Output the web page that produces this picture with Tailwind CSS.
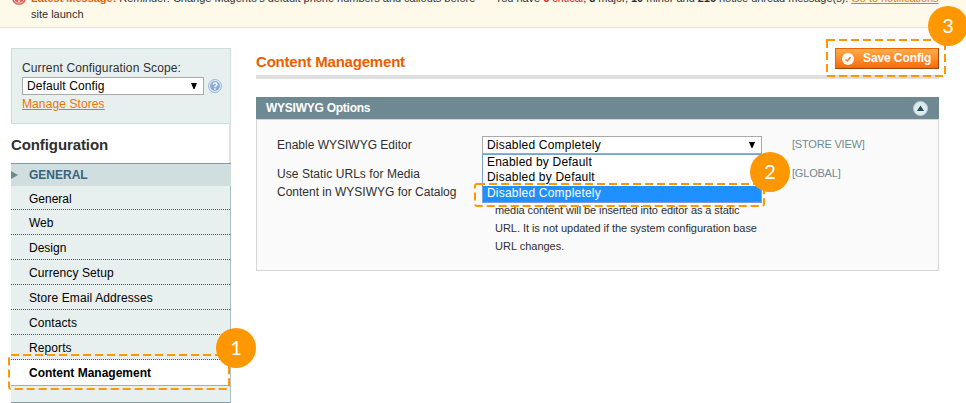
<!DOCTYPE html>
<html lang="en">
<head>
<meta charset="utf-8">
<title>Configuration</title>
<script src="https://cdn.jsdelivr.net/npm/@tailwindcss/browser@4"></script>
</head>
<body class="relative w-[966px] h-[403px] overflow-hidden bg-white text-[#2f2f2f] text-[12px] leading-[18px] font-['Liberation_Sans',Arial,sans-serif]">

<header class="h-7 flex items-end overflow-hidden bg-[#fff9e9] border-b border-[#eee2be] pl-[12px] pb-[5px] text-[11px] leading-4">
  <svg class="w-[14px] h-[14px] mb-[17px] mr-[5px] shrink-0" viewBox="0 0 14 14"><circle cx="7" cy="7" r="7" fill="#df6359"/><circle cx="7" cy="7" r="5.2" fill="none" stroke="#f6c7c0"/><path d="M7 3v5M7 9.500v1.500" stroke="#fff" stroke-width="2"/></svg>
  <p class="w-[464px] whitespace-nowrap"><span class="tracking-[-0.02px]"><b class="text-[#eb5e00]">Latest Message:</b> Reminder: Change Magento's default phone numbers and callouts before</span><br>site launch</p>
  <p class="whitespace-nowrap mb-4 tracking-[-0.04px]">You have <b class="text-[#df0a28]">6</b> <span class="text-[#df0a28]">critical</span>, <b>8</b> major, <b>10</b> minor and <b>216</b> notice unread message(s). <a class="text-[#ea7601] underline">Go to notifications</a></p>
</header>

<div class="flex pl-[11px] pt-5">
  <aside class="w-[220px] shrink-0">
    <section class="h-[76px] bg-[#e7efef] border border-[#cddddd] pl-[10px] pt-[10px]">
      <p class="tracking-[0.13px]">Current Configuration Scope:</p>
      <div class="flex items-center h-[18px]">
        <div class="flex items-center justify-between w-[182px] h-[18px] bg-white border border-[#a9a9a9] pl-1 pr-[6px] text-black"><span class="tracking-[0.1px]">Default Config</span><svg class="w-[6px] h-[6px]" viewBox="0 0 6 6"><path d="M0 0h6L3.500 6h-1z"/></svg></div>
        <svg class="w-[14px] h-[14px] ml-1" viewBox="0 0 14 14"><circle cx="7" cy="7" r="6.500" fill="#e5eef7" stroke="#9ab8d6"/><circle cx="7" cy="7" r="5" fill="#8aaed3"/><path d="M5.200 5.500C5.200 3.500 9 3.500 9 5.500C9 6.800 7 6.800 7 8.300M7 9.200v1.500" fill="none" stroke="#fff" stroke-width="1.400"/></svg>
      </div>
      <a class="inline-block text-[#ea7601] underline tracking-[0.1px]">Manage Stores</a>
    </section>
    <h3 class="h-[39px] pt-[12px] text-[15px] font-bold tracking-[-0.1px] border-r-2 border-[#e0e0e0]">Configuration</h3>
    <nav class="h-[240px] bg-[#e7efef] border-t border-[#849ba3] text-black">
      <div class="h-[22px] flex items-center bg-[#d0dedf] text-[#36637d] font-bold"><svg class="w-[7px] h-2 mr-[11px]" viewBox="0 0 7 8"><path d="M0 0L7 4L0 8z" fill="#6f8992"/></svg>GENERAL</div>
      <div class="border-r border-[#a9bfc3]">
        <a class="block h-6 pl-[18px] pt-1 border-b border-dotted border-[#555]">General</a>
        <a class="block h-[25px] pl-[18px] pt-1 border-b border-dotted border-[#555]">Web</a>
        <a class="block h-[25px] pl-[18px] pt-1 border-b border-dotted border-[#555]">Design</a>
        <a class="block h-[25px] pl-[18px] pt-1 border-b border-dotted border-[#555] tracking-[0.1px]">Currency Setup</a>
        <a class="block h-[25px] pl-[18px] pt-1 border-b border-dotted border-[#555] tracking-[0.12px]">Store Email Addresses</a>
        <a class="block h-[25px] pl-[18px] pt-1 border-b border-dotted border-[#555] tracking-[0.1px]">Contacts</a>
        <a class="block h-[25px] pl-[18px] pt-1 border-b border-dotted border-[#555] tracking-[0.1px]">Reports</a>
        <a class="block h-[26px] pl-[18px] pt-1 border-b border-[#a9a9a9] bg-white font-bold">Content Management</a>
        <div class="h-[17px] border-b border-[#849ba3]"></div>
      </div>
    </nav>
  </aside>

  <main class="w-[683px] ml-[25px]">
    <div class="h-[31px] flex justify-between border-b-4 border-[#dfdfdf]">
      <h3 class="pt-[5px] text-[15px] font-bold text-[#eb5e00] tracking-[-0.2px]">Content Management</h3>
      <button class="flex items-center w-[104px] h-[21px] pl-[6px] bg-linear-to-b from-[#ffac47] to-[#fa6900] border border-[#ed6502] border-r-[#a04300] border-b-[#a04300] text-white font-bold whitespace-nowrap"><svg class="w-3 h-3 mr-[9px]" viewBox="0 0 12 12"><circle cx="6" cy="6" r="6" fill="#fff"/><path d="M3.500 6.500L5.300 8L8.500 4" fill="none" stroke="#f47a20" stroke-width="1.500"/></svg><span class="tracking-[-0.1px] pb-0.5">Save Config</span></button>
    </div>
    <h4 class="mt-[18px] h-[22px] flex items-center justify-between pl-[10px] pr-[11px] bg-[#6f8992] text-white font-bold"><span class="tracking-[-0.25px]">WYSIWYG Options</span><svg class="w-[15px] h-[15px]" viewBox="0 0 15 15"><circle cx="7.500" cy="7.500" r="7" fill="#dcebed" stroke="#b9cfd3"/><path d="M7.500 4.500L11 10H4z" fill="#234b57"/></svg></h4>
    <section class="h-[152px] bg-[#fafafa] border border-[#d6d6d6] pl-5 pt-4 flex">
      <div class="w-[205px] whitespace-nowrap">
        <p class="mb-[11px]">Enable WYSIWYG Editor</p>
        <p><span class="tracking-[0.06px]">Use Static URLs for Media</span><br>Content in WYSIWYG for Catalog</p>
      </div>
      <div class="w-[280px]">
        <div class="flex items-center justify-between h-[18px] bg-white border border-[#a9a9a9] pl-1 pr-[6px] text-black"><span class="tracking-[0.2px]">Disabled Completely</span><svg class="w-[6px] h-[6px]" viewBox="0 0 6 6"><path d="M0 0h6L3.500 6h-1z"/></svg></div>
        <div class="h-[49px] bg-white border border-[#7b9fd8] text-black leading-[15px] tracking-[0.2px]">
          <div class="h-[15px] pl-1">Enabled by Default</div>
          <div class="h-[16px] pl-1">Disabled by Default</div>
          <div class="h-[16px] pl-1 bg-[#1e90ff] text-white">Disabled Completely</div>
        </div>
        <p class="-mt-0.5 pl-[13px] text-[11px] leading-[18px] whitespace-nowrap"><span class="tracking-[-0.08px]">media content will be inserted into editor as a static</span><br><span class="tracking-[-0.04px]">URL. It is not updated if the system configuration base</span><br>URL changes.</p>
      </div>
      <div class="-mt-px pl-[30px] text-[11px] text-[#6f8992] tracking-[-0.2px]">
        <p class="mb-[11px]">[STORE VIEW]</p>
        <p>[GLOBAL]</p>
      </div>
    </section>
  </main>
</div>

<svg class="absolute inset-0 w-[966px] h-[403px]" viewBox="0 0 966 403" fill="none" stroke="#ff9800" stroke-width="2" stroke-dasharray="8 4">
  <rect x="9" y="355" width="220" height="34" rx="2"/>
  <rect x="475" y="184" width="289" height="22" rx="2"/>
  <rect x="827" y="40" width="118" height="36"/>
</svg>
<div class="absolute left-[216px] top-[328px] size-10 rounded-full bg-[#ff9800] text-white text-[20px] leading-[38px] text-center font-[Lato,sans-serif]">1</div>
<div class="absolute left-[750px] top-[152px] size-10 rounded-full bg-[#ff9800] text-white text-[20px] leading-[38px] text-center font-[Lato,sans-serif]">2</div>
<div class="absolute left-[928px] top-[6px] size-10 rounded-full bg-[#ff9800] text-white text-[20px] leading-[38px] text-center font-[Lato,sans-serif]">3</div>
</body>
</html>
